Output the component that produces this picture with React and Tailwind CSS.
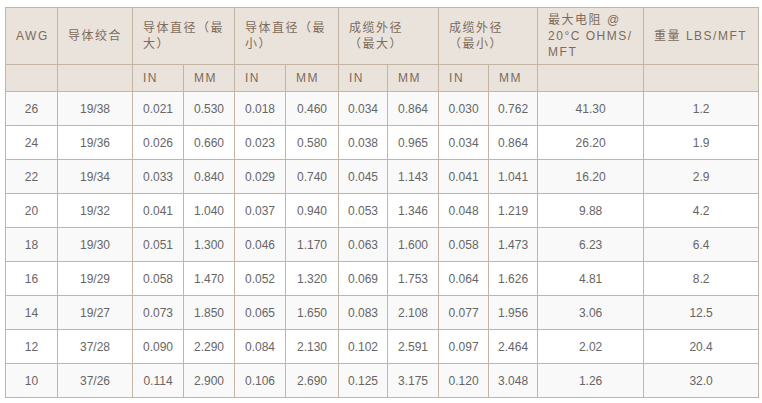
const rows = [
  ["26", "19/38", "0.021", "0.530", "0.018", "0.460", "0.034", "0.864", "0.030", "0.762", "41.30", "1.2"],
  ["24", "19/36", "0.026", "0.660", "0.023", "0.580", "0.038", "0.965", "0.034", "0.864", "26.20", "1.9"],
  ["22", "19/34", "0.033", "0.840", "0.029", "0.740", "0.045", "1.143", "0.041", "1.041", "16.20", "2.9"],
  ["20", "19/32", "0.041", "1.040", "0.037", "0.940", "0.053", "1.346", "0.048", "1.219", "9.88", "4.2"],
  ["18", "19/30", "0.051", "1.300", "0.046", "1.170", "0.063", "1.600", "0.058", "1.473", "6.23", "6.4"],
  ["16", "19/29", "0.058", "1.470", "0.052", "1.320", "0.069", "1.753", "0.064", "1.626", "4.81", "8.2"],
  ["14", "19/27", "0.073", "1.850", "0.065", "1.650", "0.083", "2.108", "0.077", "1.956", "3.06", "12.5"],
  ["12", "37/28", "0.090", "2.290", "0.084", "2.130", "0.102", "2.591", "0.097", "2.464", "2.02", "20.4"],
  ["10", "37/26", "0.114", "2.900", "0.106", "2.690", "0.125", "3.175", "0.120", "3.048", "1.26", "32.0"],
];

const widths = ["w-[52px]", "w-[75px]", "w-[51px]", "w-[51px]", "w-[51px]", "w-[53px]", "w-[49px]", "w-[51px]", "w-[50px]", "w-[49px]", "w-[106px]", "w-[115px]"];

const th = "border border-[#c4b4a4] bg-[#eae3db] px-[10px] text-left align-middle font-normal text-[12px] leading-[16px] tracking-[1.5px] text-[#7d6b5c]";

export default function App() {
  return (
    <div className="bg-white pl-[5px] pt-[7px] font-['Liberation_Sans','Noto_Sans_CJK_SC',sans-serif]">
      <table className="w-[753px] table-fixed border-collapse">
        <colgroup>
          {widths.map((w, i) => (
            <col key={i} className={w} />
          ))}
        </colgroup>
        <thead>
          <tr className="h-[57px]">
            <th className={th}>AWG</th>
            <th className={th}>导体绞合</th>
            <th className={th} colSpan={2}>导体直径（最大）</th>
            <th className={th} colSpan={2}>导体直径（最小）</th>
            <th className={th} colSpan={2}>成缆外径（最大）</th>
            <th className={th} colSpan={2}>成缆外径（最小）</th>
            <th className={th}>
              最大电阻 @ 20°C OHMS/<wbr />MFT
            </th>
            <th className={th}>重量 LBS/MFT</th>
          </tr>
          <tr className="h-[27px]">
            <th className={th}></th>
            <th className={th}></th>
            <th className={th}>IN</th>
            <th className={th}>MM</th>
            <th className={th}>IN</th>
            <th className={th}>MM</th>
            <th className={th}>IN</th>
            <th className={th}>MM</th>
            <th className={th}>IN</th>
            <th className={th}>MM</th>
            <th className={th}></th>
            <th className={th}></th>
          </tr>
        </thead>
        <tbody>
          {rows.map((r, i) => (
            <tr key={i} className={`h-[34px] ${i % 2 === 0 ? "bg-[#f9f9f9]" : "bg-white"}`}>
              {r.map((c, j) => (
                <td key={j} className="border border-[#c4b4a4] px-1 text-center align-middle text-[12px] text-[#666666]">
                  {c}
                </td>
              ))}
            </tr>
          ))}
        </tbody>
      </table>
    </div>
  );
}
